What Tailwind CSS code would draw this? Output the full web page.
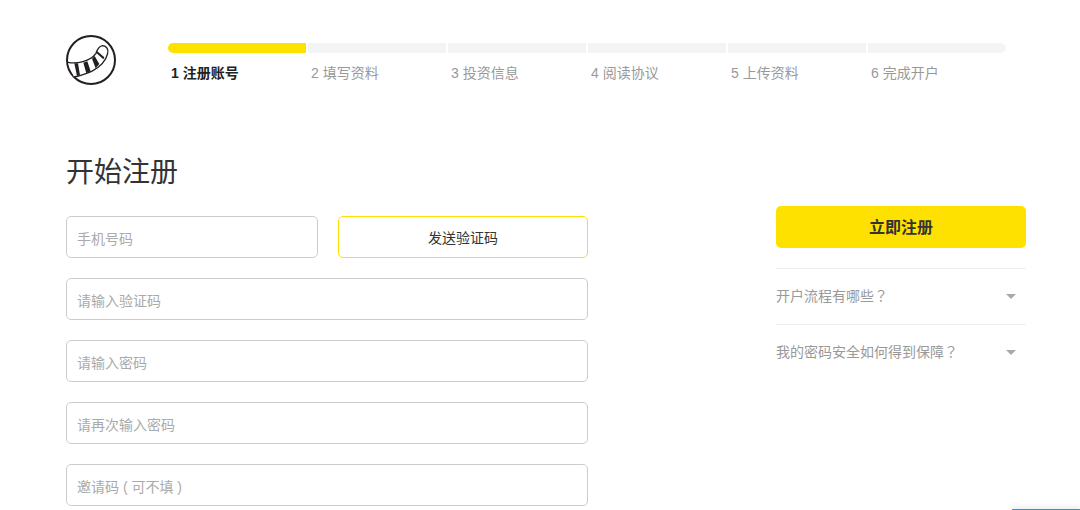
<!DOCTYPE html>
<html lang="zh">
<head>
<meta charset="utf-8">
<script src="https://cdn.jsdelivr.net/npm/@tailwindcss/browser@4"></script>
<title>开始注册</title>
</head>
<body class="bg-white">
<div class="relative h-[510px] w-[1080px] overflow-hidden font-['Liberation_Sans','Noto_Sans_CJK_SC',sans-serif] text-[14px] text-[#333]">
  <header class="flex pl-[66px] pt-[35px]">
    <svg class="h-[50px] w-[50px] shrink-0" viewBox="18 15 150 150" fill="none">
      <circle cx="93" cy="90" r="72" stroke="#231f20" stroke-width="6"/>
      <path d="M24 97C50 102 90 95 108 70C112 58 118 48 128 47C140 48 146 58 143 70C138 92 118 112 95 124C78 132 60 137 42 141" stroke="#231f20" stroke-width="4" fill="#fff"/>
      <path d="M43 100L54 100L60 136L51 138ZM70 98L82 94L92 124L79 130ZM96 86L104 78L118 102L107 115ZM110 70L112 64L133 82L130 88Z" fill="#231f20"/>
    </svg>
    <div class="ml-[52px] w-[838px] pt-[8px]">
      <div class="flex gap-[2px]">
        <div class="h-[10px] w-[138px] rounded-l-[5px] bg-[#ffe100]"></div>
        <div class="h-[10px] w-[138px] bg-[#f3f4f5]"></div>
        <div class="h-[10px] w-[138px] bg-[#f3f4f5]"></div>
        <div class="h-[10px] w-[138px] bg-[#f3f4f5]"></div>
        <div class="h-[10px] w-[138px] bg-[#f3f4f5]"></div>
        <div class="h-[10px] w-[138px] rounded-r-[5px] bg-[#f3f4f5]"></div>
      </div>
      <div class="mt-[10px] flex gap-[2px] pl-[3px] leading-[20px] text-[#999]">
        <span class="w-[138px] font-bold text-[#222]">1 注册账号</span>
        <span class="w-[138px]">2 填写资料</span>
        <span class="w-[138px]">3 投资信息</span>
        <span class="w-[138px]">4 阅读协议</span>
        <span class="w-[138px]">5 上传资料</span>
        <span class="w-[135px]">6 完成开户</span>
      </div>
    </div>
  </header>

  <main class="flex pl-[66px] pt-[67px]">
    <section class="w-[522px]">
      <h1 class="mt-[1px] text-[28px] leading-[40px] font-normal text-[#333]">开始注册</h1>
      <form class="mt-[23px] flex flex-col gap-[20px]">
        <div class="flex justify-between">
          <input class="h-[42px] w-[252px] rounded-[5px] border border-[#ccc] px-[10px] pt-[3px] outline-none placeholder:text-[#aaa]" placeholder="手机号码">
          <button type="button" class="h-[42px] w-[250px] rounded-[5px] border border-[#ffe100] pt-[2px] text-[#333]">发送验证码</button>
        </div>
        <input class="h-[42px] w-full rounded-[5px] border border-[#ccc] px-[10px] pt-[3px] outline-none placeholder:text-[#aaa]" placeholder="请输入验证码">
        <input class="h-[42px] w-full rounded-[5px] border border-[#ccc] px-[10px] pt-[3px] outline-none placeholder:text-[#aaa]" placeholder="请输入密码">
        <input class="h-[42px] w-full rounded-[5px] border border-[#ccc] px-[10px] pt-[3px] outline-none placeholder:text-[#aaa]" placeholder="请再次输入密码">
        <input class="h-[42px] w-full rounded-[5px] border border-[#ccc] px-[10px] pt-[3px] outline-none placeholder:text-[#aaa]" placeholder="邀请码 ( 可不填 )">
      </form>
    </section>

    <aside class="ml-[188px] w-[250px] pt-[54px]">
      <button type="button" class="h-[42px] w-full rounded-[5px] bg-[#ffe100] pt-[2px] text-[16px] font-bold text-[#333]">立即注册</button>
      <div class="mt-[20px] flex h-[56px] items-center justify-between border-t border-[#eee] pr-[10px] leading-[20px] text-[#999]">
        <span class="h-[20px] -translate-y-[2px]">开户流程有哪些<span lang="zh-TW" class="font-['Noto_Sans_CJK_TC',sans-serif]">？</span></span>
        <span class="h-0 w-0 border-x-[5px] border-t-[5px] border-x-transparent border-t-[#aaa]"></span>
      </div>
      <div class="flex h-[56px] items-center justify-between border-t border-[#eee] pr-[10px] leading-[20px] text-[#999]">
        <span class="h-[20px] -translate-y-[2px]">我的密码安全如何得到保障<span lang="zh-TW" class="font-['Noto_Sans_CJK_TC',sans-serif]">？</span></span>
        <span class="h-0 w-0 border-x-[5px] border-t-[5px] border-x-transparent border-t-[#aaa]"></span>
      </div>
    </aside>
  </main>

  <div class="absolute bottom-0 left-[1012px] right-0 h-px bg-[#2a9bc4] shadow-[0_-1px_4px_rgba(0,0,0,0.3)]"></div>
</div>
</body>
</html>
